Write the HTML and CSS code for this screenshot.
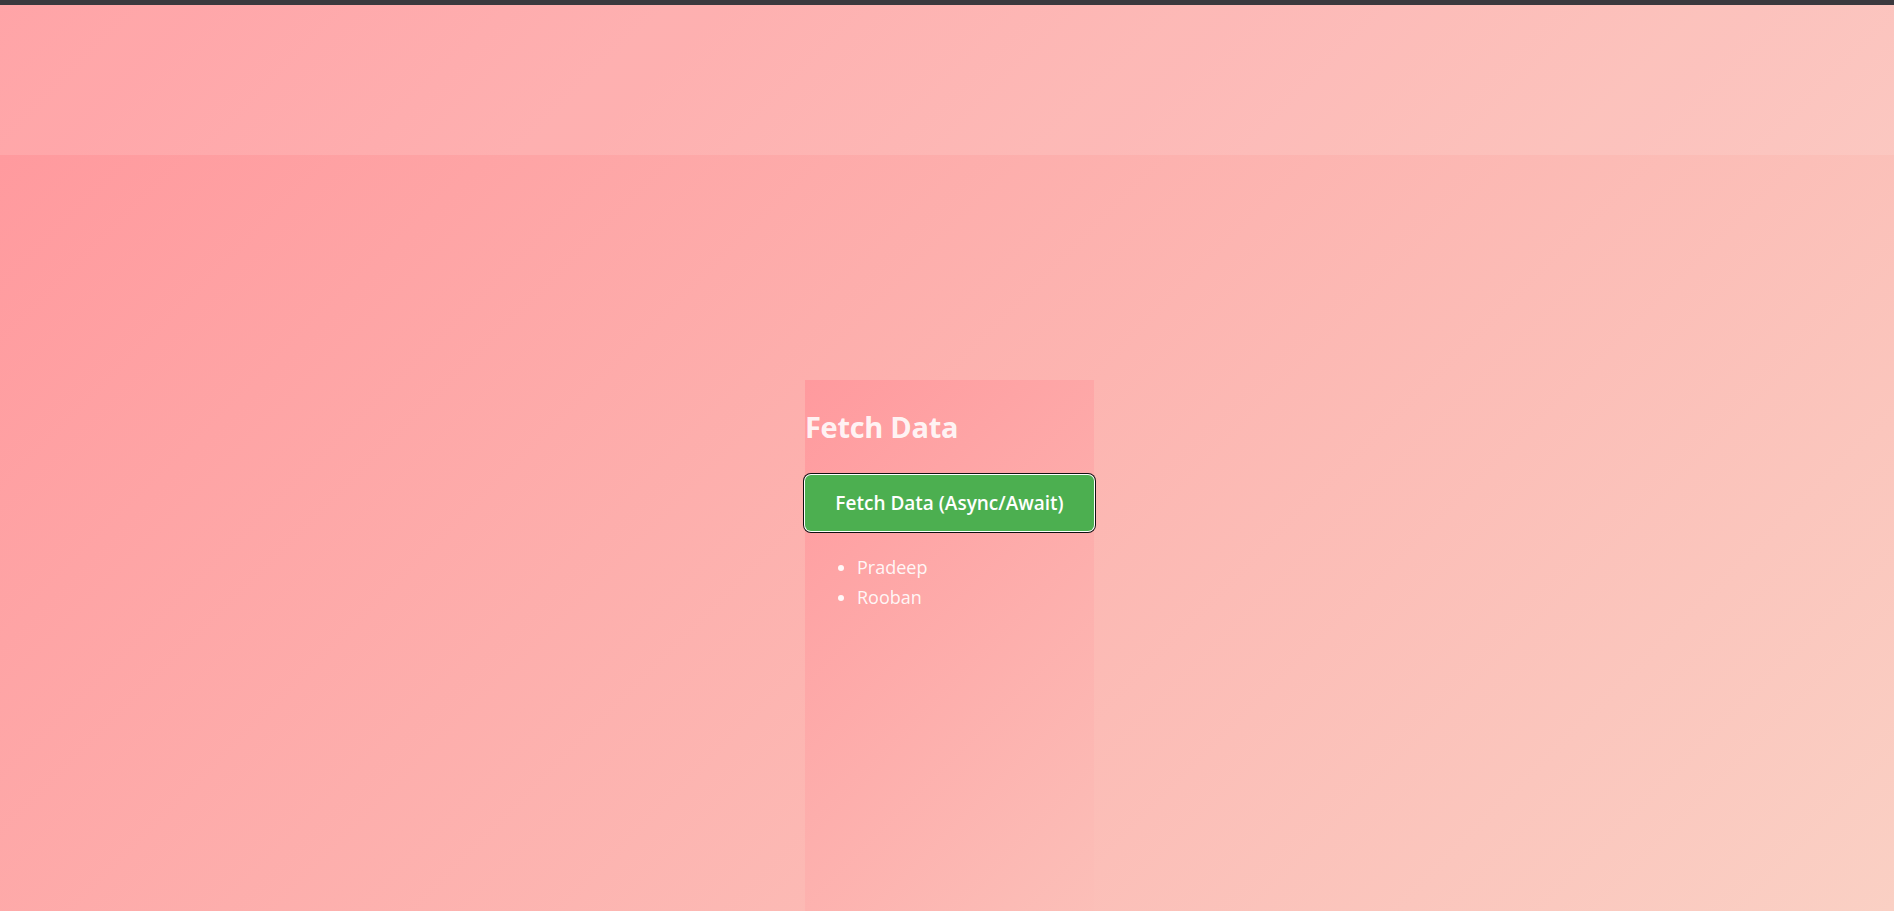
FILE: index.html
```html
<!DOCTYPE html>
<html lang="en">
<head>
<meta charset="utf-8">
<title>Fetch Data</title>
<link rel="stylesheet" href="styles.css">
</head>
<body>
<div class="topbar"></div>
<header class="header"></header>
<main class="main">
  <section class="card">
    <h2 class="title">Fetch Data</h2>
    <button class="fetch-btn" type="button">Fetch Data (Async/Await)</button>
    <ul class="list">
      <li>Pradeep</li>
      <li>Rooban</li>
    </ul>
  </section>
</main>
</body>
</html>
```

FILE: styles.css
```css
html, body {
  margin: 0;
  padding: 0;
  height: 100%;
  overflow: hidden;
}
body {
  display: flex;
  flex-direction: column;
  font-family: "Open Sans", "Noto Sans", sans-serif;
  background: linear-gradient(135deg, #ff9a9e 0%, #fad0c4 100%);
}
.topbar {
  height: 5px;
  flex: 0 0 5px;
  background: #3a393e;
}
.header {
  flex: 0 0 150px;
  background: rgba(255, 255, 255, 0.1);
}
.main {
  flex: 1;
  display: flex;
  flex-direction: column;
  align-items: center;
  padding-top: 225px;
  background: linear-gradient(135deg, #ff9a9e 0%, #fad0c4 100%);
  min-height: 0;
  overflow: hidden;
}
.card {
  flex: 0 0 auto;
  height: 100vh;
  width: 289px;
  margin-left: 5px;
  background: linear-gradient(135deg, #ff9a9e 0%, #fad0c4 100%);
  padding: 29px 0 0;
  box-sizing: border-box;
}
.title {
  margin: 0 0 30px;
  font-size: 29px;
  line-height: 36px;
  font-weight: 700;
  color: rgba(255, 255, 255, 0.9);
  letter-spacing: -0.3px;
}
.fetch-btn {
  display: block;
  width: 100%;
  height: 56px;
  border: none;
  border-radius: 6px;
  background: #4caf50;
  color: #fff;
  font-family: "Open Sans", "Noto Sans", sans-serif;
  font-size: 19px;
  font-weight: 600;
  padding: 0;
  box-shadow: 0 0 0 1px #ffffff, 0 0 0 2px #101010;
}
.list {
  margin: 21px 0 0;
  padding-left: 52px;
  color: rgba(255, 255, 255, 0.92);
  font-size: 18px;
  line-height: 30px;
}
```
